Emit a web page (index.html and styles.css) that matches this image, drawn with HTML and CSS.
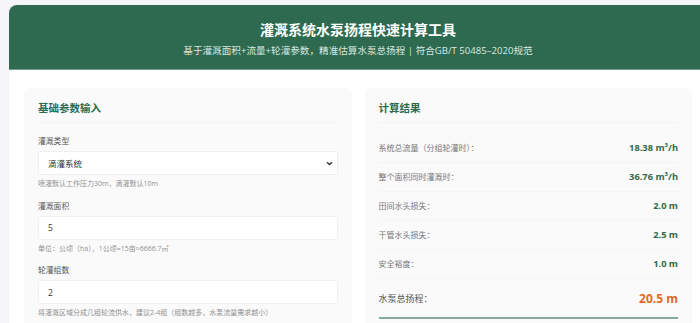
FILE: index.html
```html
<!DOCTYPE html>
<html lang="zh-CN">
<head>
<meta charset="utf-8">
<title>灌溉系统水泵扬程快速计算工具</title>
<link rel="stylesheet" href="styles.css">
</head>
<body>
<div class="app">
  <header class="hero">
    <h1>灌溉系统水泵扬程快速计算工具</h1>
    <p>基于灌溉面积+流量+轮灌参数，精准估算水泵总扬程 | 符合GB/T 50485–2020规范</p>
  </header>
  <main class="content">
    <section class="panel">
      <h2>基础参数输入</h2>
      <div class="fields">
        <div class="field">
          <label class="label">灌溉类型</label>
          <div class="select-wrap">
            <select class="control select"><option>滴灌系统</option><option>喷灌系统</option></select>
            <svg class="chev" width="7" height="5" viewBox="0 0 7 5"><path d="M1 1.2 L3.5 3.6 L6 1.2" fill="none" stroke="#333" stroke-width="1.4"/></svg>
          </div>
          <div class="hint">喷灌默认工作压力30m，滴灌默认10m</div>
        </div>
        <div class="field">
          <label class="label">灌溉面积</label>
          <input class="control" value="5">
          <div class="hint">单位：公顷（ha），1公顷=15亩≈6666.7㎡</div>
        </div>
        <div class="field">
          <label class="label">轮灌组数</label>
          <input class="control" value="2">
          <div class="hint">将灌溉区域分成几组轮流供水，建议2-4组（组数越多，水泵流量需求越小）</div>
        </div>
      </div>
    </section>
    <section class="panel">
      <h2>计算结果</h2>
      <div class="results">
        <div class="row"><span class="k">系统总流量（分组轮灌时）：</span><span class="v">18.38 m³/h</span></div>
        <div class="row"><span class="k">整个面积同时灌溉时：</span><span class="v">36.76 m³/h</span></div>
        <div class="row"><span class="k">田间水头损失：</span><span class="v">2.0 m</span></div>
        <div class="row"><span class="k">干管水头损失：</span><span class="v">2.5 m</span></div>
        <div class="row"><span class="k">安全裕度：</span><span class="v">1.0 m</span></div>
        <div class="row total"><span class="k">水泵总扬程：</span><span class="v">20.5 m</span></div>
      </div>
    </section>
  </main>
</div>
</body>
</html>
```

FILE: styles.css
```css
html, body {
  margin: 0;
  overflow: hidden;
}
body {
  background: #f5f5fa;
  padding: 5px 0 0 9px;
  font-family: "Open Sans", "Noto Sans CJK SC", sans-serif;
  color: #333;
}
.app {
  width: 698px;
  background: #ffffff;
  border-radius: 8px 8px 0 0;
}
.hero {
  background: #2d6a4f;
  border-radius: 8px 8px 0 0;
  border-bottom: 1px solid #6f9c88;
  height: 65px;
  box-sizing: border-box;
  padding-top: 16px;
  text-align: center;
  color: #fff;
}
.hero h1 {
  margin: 0;
  font-size: 14px;
  line-height: 18px;
  font-weight: 700;
}
.hero p {
  margin: 6px 0 0;
  font-size: 9.6px;
  line-height: 12px;
  color: #dbe7e1;
}
.content {
  display: grid;
  grid-template-columns: 1fr 1fr;
  gap: 13px;
  padding: 18px 15px 0;
}
.panel {
  background: #fafafb;
  border-radius: 6px;
  padding: 14px 14px 20px;
}
.panel h2 {
  margin: 0 0 11px;
  font-size: 10.5px;
  line-height: 12px;
  font-weight: 700;
  color: #2d6a4f;
  padding-bottom: 8px;
  border-bottom: 1px solid #f4f4f6;
}
.fields {
  padding-top: 2px;
  display: flex;
  flex-direction: column;
  gap: 12.5px;
}
.field {
  display: flex;
  flex-direction: column;
}
.label {
  font-size: 7.8px;
  line-height: 10px;
  color: #555;
  margin-bottom: 5px;
}
.select-wrap {
  position: relative;
}
.control {
  display: block;
  width: 100%;
  box-sizing: border-box;
  height: 24px;
  margin: 0;
  padding: 0 9px;
  border: 1px solid #efeff2;
  border-radius: 3px;
  background: #fff;
  font-family: "Open Sans", "Noto Sans CJK SC", sans-serif;
  font-size: 8.5px;
  color: #333;
  outline: none;
}
.select {
  appearance: none;
  -webkit-appearance: none;
}
.chev {
  position: absolute;
  right: 5px;
  top: 10px;
  pointer-events: none;
}
.hint {
  margin-top: 4px;
  font-size: 7px;
  line-height: 9px;
  color: #919191;
}
.results {
  display: flex;
  flex-direction: column;
}
.row {
  display: flex;
  justify-content: space-between;
  align-items: center;
  padding: 9px 0;
  border-bottom: 1px solid #f4f4f6;
}
.row .k {
  font-size: 8px;
  line-height: 10px;
  color: #777;
}
.row .v {
  font-size: 9.3px;
  line-height: 10px;
  font-weight: 700;
  color: #2d6a4f;
}
.row.total {
  padding: 13px 0 11px;
  border-bottom: 2px solid #86a89e;
}
.row.total .k {
  font-size: 9px;
  line-height: 14px;
  color: #555;
}
.row.total .v {
  font-size: 12px;
  line-height: 14px;
  color: #e0691f;
}
```
